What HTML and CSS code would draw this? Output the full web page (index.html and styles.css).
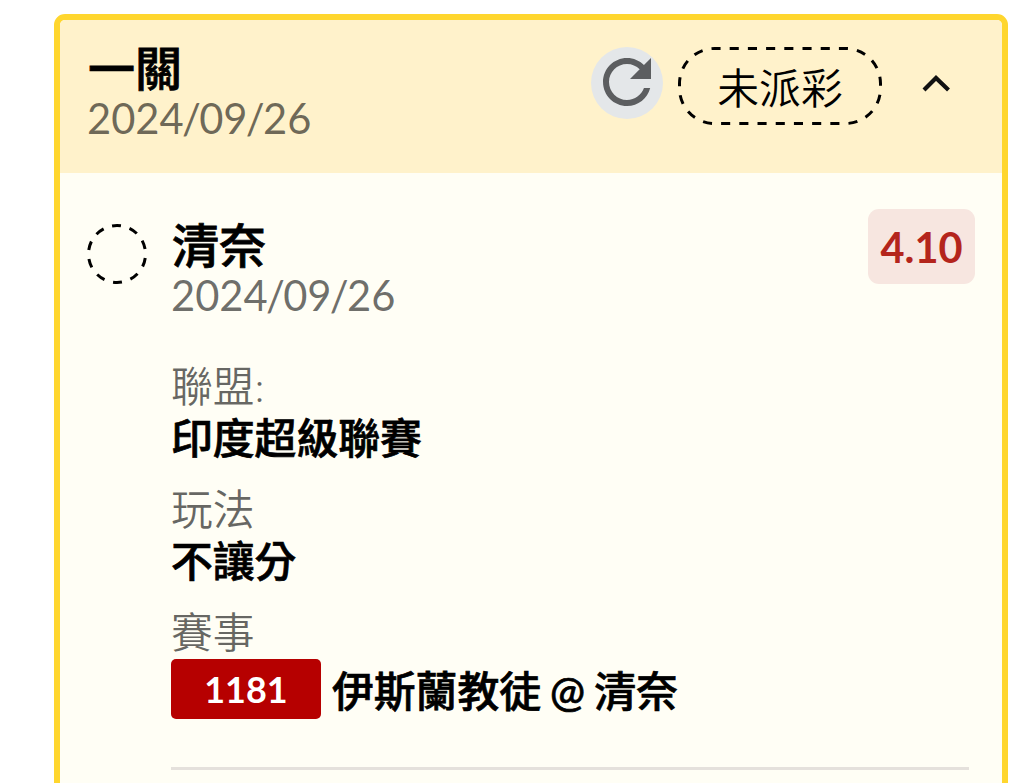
FILE: index.html
```html
<!DOCTYPE html>
<html lang="zh-Hant">

<head>
  <meta charset="UTF-8" />
  <meta name="viewport" content="width=device-width, initial-scale=1.0" />
  <title>投注紀錄</title>
  <link rel="stylesheet" href="styles.css">
</head>

<body>
  <article class="ticket">
    <header class="ticket-header">
      <div class="ticket-title">
        <h2>一關</h2>
        <p class="date">2024<span>/</span>09<span>/</span>26</p>
      </div>
      <button class="refresh" aria-label="重新整理">
        <svg viewBox="0 0 24 24">
          <path d="M17.65 6.35C16.2 4.9 14.21 4 12 4c-4.42 0-7.99 3.58-7.99 8s3.57 8 7.99 8c3.73 0 6.84-2.55 7.73-6h-2.08c-.82 2.33-3.04 4-5.65 4-3.31 0-6-2.69-6-6s2.69-6 6-6c1.66 0 3.14.69 4.22 1.78L13 11h7V4l-2.35 2.35z" />
        </svg>
      </button>
      <div class="status">
        <svg class="status-outline" viewBox="0 0 204 78">
          <rect x="1.5" y="1.5" width="201" height="75" rx="35" pathLength="486" />
        </svg>
        <span>未派彩</span>
      </div>
      <button class="toggle" aria-label="收合">
        <svg viewBox="0 0 30 20">
          <path d="M3 16L15 4L27.5 16" />
        </svg>
      </button>
    </header>

    <section class="bet">
      <svg class="bet-state" viewBox="0 0 60 60">
        <circle cx="30" cy="30" r="28.5" pathLength="180" />
      </svg>
      <div class="bet-body">
        <div class="bet-head">
          <div>
            <h2>清奈</h2>
            <p class="date">2024<span>/</span>09<span>/</span>26</p>
          </div>
          <span class="odds">4.10</span>
        </div>
        <dl class="details">
          <dt>聯盟:</dt>
          <dd>印度超級聯賽</dd>
          <dt>玩法</dt>
          <dd>不讓分</dd>
          <dt>賽事</dt>
          <dd class="match"><span class="match-no">1181</span><span class="teams">伊斯蘭教徒 @ 清奈</span></dd>
        </dl>
      </div>
    </section>
  </article>
</body>

</html>
```
FILE: styles.css
```css
* {
  box-sizing: border-box;
}

body {
  margin: 0;
  height: 783px;
  overflow: hidden;
  background: #fff;
  font-family: Lato, 'Noto Sans CJK TC', sans-serif;
  font-size: 41.8px;
  color: #000;
}

h2,
p,
dl,
dd {
  margin: 0;
}

button {
  padding: 0;
  border: 0;
  background: none;
}

.ticket {
  width: 954px;
  height: 800px;
  margin: 14px 0 0 54px;
  border: 6px solid #ffd62e;
  border-radius: 11px;
  background: #fffef5;
  overflow: hidden;
}

.ticket-header {
  display: flex;
  align-items: flex-start;
  height: 153px;
  padding: 27px 51px 0 28px;
  background: #fff2cb;
}

.ticket-title {
  flex: 1;
}

.ticket-title h2 {
  margin-top: -3px;
}

h2 {
  font-size: 47px;
  font-weight: 500;
  line-height: 48px;
  -webkit-text-stroke: 0.8px #000;
}

.date {
  margin: 1px 0 0 -1px;
  font-size: 41.7px;
  line-height: 50px;
  color: rgba(0, 0, 0, 0.58);
}

.date span {
  margin: 0 -1.7px;
}

.refresh {
  width: 72px;
  height: 72px;
  margin-right: 15px;
  border-radius: 50%;
  background: #e4e7e9;
}

.refresh svg {
  display: block;
  width: 72px;
  height: 72px;
  margin-top: -2px;
  fill: #5c5e60;
}

.status {
  position: relative;
  width: 204px;
  height: 78px;
  margin-right: 39px;
  font-weight: 350;
  text-align: center;
  line-height: 82px;
}

.status-outline {
  position: absolute;
  top: 0;
  left: 0;
  width: 204px;
  height: 78px;
}

.status-outline rect {
  fill: none;
  stroke: #000;
  stroke-width: 3;
  stroke-dasharray: 9 9;
  stroke-dashoffset: 3;
}

.toggle {
  height: 20px;
  margin-top: 27px;
}

.toggle svg {
  display: block;
  width: 30px;
  height: 20px;
  fill: none;
  stroke: #111;
  stroke-width: 4.2;
}

.bet {
  display: flex;
  align-items: flex-start;
  padding: 36px 27px 0;
}

.bet-state {
  flex: none;
  width: 60px;
  height: 60px;
  margin: 15px 24px 0 0;
  fill: none;
  stroke: #000;
  stroke-width: 3;
  stroke-dasharray: 9 9;
  stroke-dashoffset: -40;
}

.bet-body {
  flex: 1;
}

.bet-head {
  display: flex;
  justify-content: space-between;
  align-items: flex-start;
  height: 113px;
  padding: 12px 0 0 1px;
}

.odds {
  width: 107px;
  height: 75px;
  margin-top: -12px;
  border-radius: 11px;
  background: #f7e6e0;
  color: #b4251c;
  font-size: 41.5px;
  font-weight: 700;
  line-height: 77px;
  text-align: center;
}

.details {
  width: 798px;
  height: 448px;
  padding-top: 38px;
  border-bottom: 3px solid #e5e1dc;
}

.details dt {
  font-weight: 350;
  line-height: 52px;
  color: rgba(0, 0, 0, 0.6);
}

.details dd {
  margin-bottom: 19px;
  line-height: 52px;
  font-weight: 500;
  -webkit-text-stroke: 0.7px #000;
}

.details .match {
  display: flex;
  align-items: center;
  height: 60px;
  margin-top: 1px;
}

.match-no {
  width: 150px;
  height: 60px;
  margin-right: 11px;
  border-radius: 5px;
  background: #b60000;
  color: #fff;
  font-size: 36px;
  font-weight: 700;
  line-height: 61px;
  text-align: center;
  -webkit-text-stroke: 0;
}

.teams {
  padding-top: 3px;
  word-spacing: -1.5px;
}
```
